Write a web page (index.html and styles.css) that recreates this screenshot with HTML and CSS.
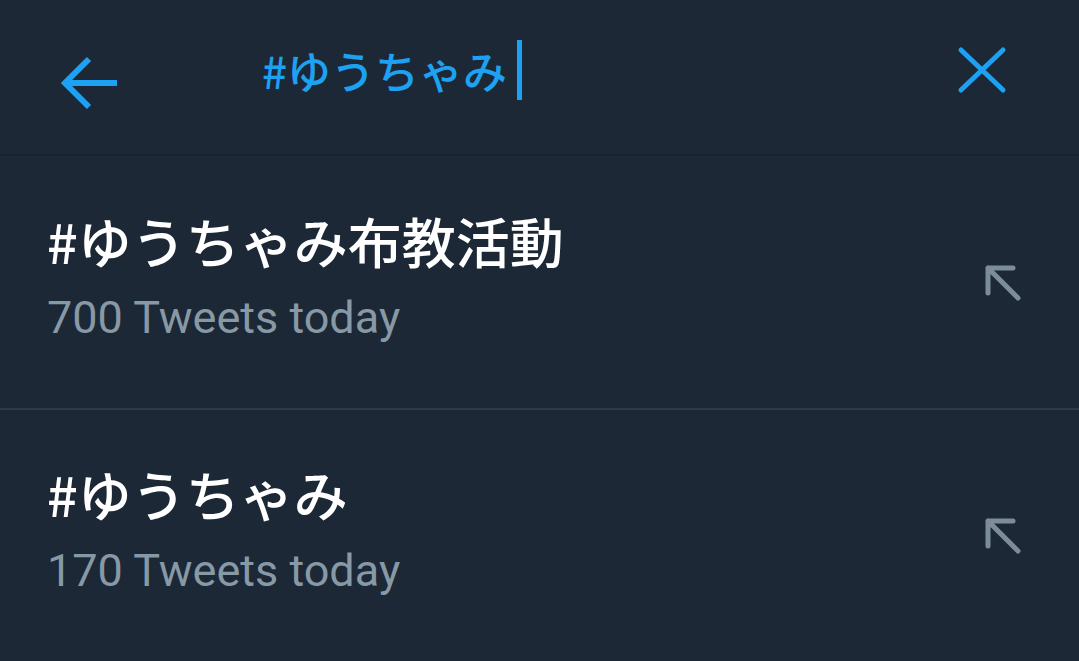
FILE: index.html
```html
<!DOCTYPE html>
<html lang="ja">
<head>
<meta charset="utf-8">
<title>Search</title>
<link rel="stylesheet" href="styles.css">
</head>
<body>
<div class="app">
  <header class="header">
    <svg class="back" width="60" height="60" viewBox="0 0 60 60" aria-label="Back">
      <path d="M5 30 H57 M29 6 L5 30 L29 54" fill="none" stroke="#1da1f2" stroke-width="6" stroke-linejoin="miter"/>
    </svg>
    <div class="query">
      <span class="query-text">#ゆうちゃみ</span><span class="caret"></span>
    </div>
    <svg class="clear" width="50" height="50" viewBox="0 0 50 50" aria-label="Clear">
      <path d="M4 4 L46 44 M46 4 L4 44" fill="none" stroke="#1da1f2" stroke-width="5" stroke-linecap="round"/>
    </svg>
  </header>
  <ul class="results">
    <li class="result">
      <div class="result-text">
        <div class="result-title">#ゆうちゃみ布教活動</div>
        <div class="result-meta">700 Tweets today</div>
      </div>
      <svg class="fill-icon" width="42" height="42" viewBox="0 0 42 42">
        <path d="M32 7 H7 V32 M7 7 L37 37" fill="none" stroke="#7d8c9b" stroke-width="5" stroke-linecap="round" stroke-linejoin="round"/>
      </svg>
    </li>
    <li class="result">
      <div class="result-text">
        <div class="result-title">#ゆうちゃみ</div>
        <div class="result-meta">170 Tweets today</div>
      </div>
      <svg class="fill-icon" width="42" height="42" viewBox="0 0 42 42">
        <path d="M32 7 H7 V32 M7 7 L37 37" fill="none" stroke="#7d8c9b" stroke-width="5" stroke-linecap="round" stroke-linejoin="round"/>
      </svg>
    </li>
  </ul>
</div>
</body>
</html>
```
FILE: styles.css
```css
* { box-sizing: border-box; }
html, body {
  margin: 0;
  padding: 0;
  background: #1c2836;
}
.app {
  width: 1079px;
  height: 661px;
  overflow: hidden;
  background: #1c2836;
  font-family: Roboto, "Noto Sans CJK JP", sans-serif;
}
.header {
  height: 156px;
  display: flex;
  align-items: center;
  border-bottom: 2px solid #18232f;
}
.back {
  margin-left: 60px;
  margin-top: 12px;
  flex: none;
}
.query {
  display: flex;
  align-items: center;
  margin-left: 142px;
  flex: 1;
  margin-top: -14px;
}
.query-text {
  font-family: "Noto Sans CJK JP", sans-serif;
  font-size: 44px;
  font-weight: 500;
  color: #1da1f2;
  line-height: 60px;
}
.caret {
  width: 5px;
  height: 60px;
  background: #1da1f2;
  margin-left: 10px;
}
.clear {
  margin-right: 72px;
  margin-top: -12px;
  flex: none;
}
.results {
  list-style: none;
  margin: 0;
  padding: 0;
}
.result {
  height: 252px;
  display: flex;
  align-items: center;
  padding-left: 47px;
  padding-right: 56px;
}
.result + .result {
  border-top: 2px solid #2c3a49;
}
.result-text {
  flex: 1;
  padding-bottom: 12px;
}
.result-title {
  font-family: "Noto Sans CJK JP", sans-serif;
  font-size: 54px;
  font-weight: 500;
  color: #ffffff;
  line-height: 70px;
}
.result-meta {
  font-family: Roboto, sans-serif;
  font-size: 45px;
  color: #8899a6;
  line-height: 56px;
  margin-top: 14px;
}
.fill-icon {
  flex: none;
}
```
